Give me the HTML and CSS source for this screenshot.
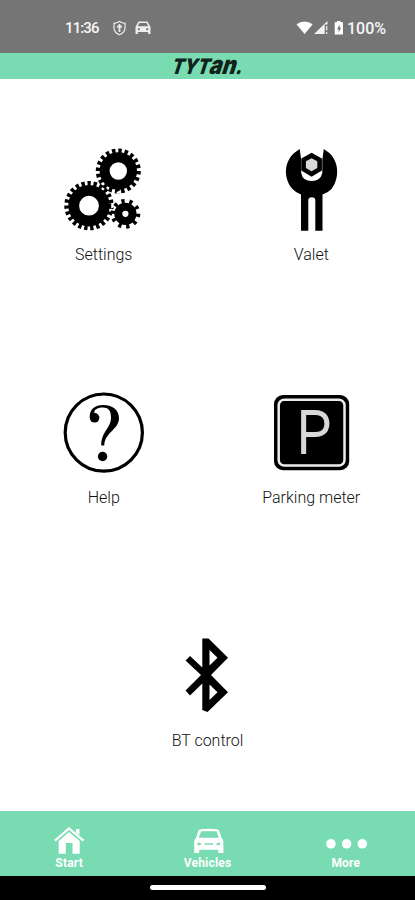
FILE: index.html
```html
<!DOCTYPE html>
<html lang="en">
<head>
<meta charset="utf-8">
<meta name="viewport" content="width=device-width, initial-scale=1">
<title>Tytan</title>
<link rel="stylesheet" href="styles.css">
</head>
<body>
<div class="app">
  <header class="status">
    <span class="clock">11:36</span>
    <svg class="shield" viewBox="112 20 16 16" fill="none" stroke="#eee" stroke-width="1.2"><path d="M119.5 21.5 Q117 23.2 114 23.3 V28 Q114 32.5 119.5 34.8 Q125 32.5 125 28 V23.3 Q122 23.2 119.5 21.5Z"/><path stroke-width="1.8" d="M119.5 24V32M117 26.7h5"/></svg>
    <svg class="minicar" viewBox="0 0 16 14" fill="#eee" fill-rule="evenodd"><path d="M3.5.5h9L15.5 6v7h-2.3v-2H2.8v2H.5V6ZM4.4 2 2.8 5.3h10.4L11.6 2ZM3.8 7a1.1 1.1 0 1 0 .01 0ZM12.2 7a1.1 1.1 0 1 0 .01 0Z"/></svg>
    <svg class="signals" viewBox="296 20 50 16" fill="#fff"><path d="M296.5 24.3Q304.5 18.5 312.7 24.3L304.6 34Z"/><path d="M314 34 327.5 21v3.5h-2.8V34Z" opacity=".9"/><path d="M325.9 26h1.5v4.5h-1.5zM325.9 32h1.5v2h-1.5z" opacity=".75"/><path fill-rule="evenodd" d="M334.7 22.3h2.2V21h3.6v1.3h2.5V34.5h-8.3ZM339.7 24.5 337 29.2h1.6v3.3l2.6-4.7h-1.5Z"/></svg>
    <span class="battery">100%</span>
  </header>
  <div class="brand">
    <svg class="logo" viewBox="0 0 76 20"><g transform="translate(4.5 0) skewX(-18)"><text x="1.5" y="17.8" textLength="71" lengthAdjust="spacingAndGlyphs">TYT<tspan class="unicase">an</tspan>.</text></g></svg>
  </div>
  <main class="menu">
    <a class="tile">
      <svg class="icon" viewBox="54 145 100 90" fill="none" stroke="#000">
        <g><circle cx="118.3" cy="171" r="13.7" stroke-width="10"/><circle cx="118.3" cy="171" r="20.2" stroke-width="4.6" pathLength="40" stroke-dasharray="1.1 .9"/></g>
        <g><circle cx="89" cy="205.7" r="15.3" stroke-width="10.8"/><circle cx="89" cy="205.7" r="22.2" stroke-width="5" pathLength="46" stroke-dasharray="1.1 .9"/></g>
        <g><circle cx="125.4" cy="213.8" r="7.1" stroke-width="8"/><circle cx="125.4" cy="213.8" r="12.6" stroke-width="4.6" pathLength="20" stroke-dasharray=".8 1.2"/></g>
      </svg>
      <span class="label">Settings</span>
    </a>
    <a class="tile">
      <svg class="icon" viewBox="261 145 100 90">
        <path d="M299.7 149L294.5 152.8C283.5 162 283.5 179 292.5 189Q296 192.8 301 194.6V230.8H308.3V200Q308.3 197.4 311.8 197.2Q315.3 197.4 315.3 200V230.8H322.5V194.6Q328 192.7 331.5 189C339.5 179 339.5 162 329 152.8L323.8 149L322.3 160V173Q320.5 181 311.7 181Q302.5 181 301.2 173V160Z"/>
        <path d="M311.6 152.7 321.9 158.5V170.5L311.6 176.7 301.3 170.5V158.5Z"/>
        <path fill="#d9d9d9" d="M311.6 158.2 317.3 161.3V168L311.6 171.2 305.9 168V161.3Z"/>
      </svg>
      <span class="label">Valet</span>
    </a>
    <a class="tile">
      <svg class="icon" viewBox="54 389 100 90">
        <circle cx="103.8" cy="432.6" r="38.6" fill="none" stroke="#000" stroke-width="3.2"/>
        <path d="M90 419C88.5 410.5 94 405 103 405C113.5 405 119 410.5 119 418.3C119 429.5 104.6 432.5 104.3 445.5H101.3C101 431.5 111 428.5 111 417.5C111 410 108 407.4 103 407.4C97 407.4 93.5 410 94.5 413.4Z"/>
        <circle cx="94.6" cy="417.8" r="4.8"/><circle cx="102.6" cy="456.5" r="4.7"/>
      </svg>
      <span class="label low">Help</span>
    </a>
    <a class="tile">
      <svg class="icon" viewBox="261 389 100 90">
        <rect x="274" y="395" width="75.2" height="75.2" rx="9"/>
        <rect x="278.7" y="399.7" width="65.8" height="65.8" rx="5.5" fill="none" stroke="#ededed" stroke-width="2.5"/>
        <text class="park" x="297" y="453" textLength="34" lengthAdjust="spacingAndGlyphs">P</text>
      </svg>
      <span class="label low">Parking meter</span>
    </a>
    <a class="tile wide">
      <svg class="icon" viewBox="157 632 100 90">
        <path fill-rule="evenodd" d="M201.3 638.5H207.5L227 657.8 210 675 227 692.3 206.5 712 201.3 710V683.5L189 695.5 184.5 690.5 200 675 184.5 660.5 189 656 201.3 667.5ZM208.5 650V665.5L216.5 657.8ZM208.5 684.5V700L216.5 692.3Z"/>
      </svg>
      <span class="label low">BT control</span>
    </a>
  </main>
  <nav class="tabs">
    <a class="tab">
      <svg class="tabicon" viewBox="49 825 40 30" fill="#fff"><path d="M58.7 841 69 832 79.7 841V853.7H72.5V843H65.8V853.7H58.7Z"/><path d="M55 840.7 69 828.5 83.5 840.7" fill="none" stroke="#fff" stroke-width="2.2"/><path d="M76 829h3.5v6l-3.5-2.5z"/></svg>
      <span class="tabtext">Start</span>
    </a>
    <a class="tab">
      <svg class="tabicon" viewBox="187 825 40 30"><path fill="#fff" fill-rule="evenodd" d="M200.5 829.2Q208.7 828.2 217 829.2Q218.5 829.3 219.2 831L221.6 838Q223.4 839.5 223.4 842V853H218.2V849.7H199.2V853H194.2V842Q194.2 839.5 196 838L198.2 831Q199 829.3 200.5 829.2ZM201.2 831.2 198.7 837.7H219L216.4 831.2ZM197.5 842.5V845Q200 845.8 201.7 844Q200 842.3 197.5 842.5ZM220 842.5V845Q217.5 845.8 215.8 844Q217.5 842.3 220 842.5ZM204.7 843.2V844.8H213V843.2Z"/></svg>
      <span class="tabtext">Vehicles</span>
    </a>
    <a class="tab">
      <svg class="tabicon wideicon" viewBox="321 825 50 30" fill="#fff"><circle cx="330.9" cy="843.8" r="4.8"/><circle cx="346.6" cy="843.8" r="4.8"/><circle cx="362.3" cy="843.8" r="4.8"/></svg>
      <span class="tabtext">More</span>
    </a>
  </nav>
  <footer class="gesture"><div class="handle"></div></footer>
</div>
</body>
</html>
```

FILE: styles.css
```css
* { box-sizing: border-box; }
body { margin: 0; background: #fff; font-family: Roboto, "Liberation Sans", sans-serif; }
.app { width: 415px; height: 900px; display: flex; flex-direction: column; overflow: hidden; }
svg { display: block; flex: none; }

.status { height: 53px; flex: none; background: #757575; display: flex; align-items: center; padding: 3px 20px 0 65px; color: #f5f5f5; font-size: 16px; }
.clock { width: 47px; font-weight: 500; font-size: 15px; letter-spacing: -.9px; }
.shield { width: 16px; height: 16px; }
.minicar { width: 16px; height: 14px; margin-left: 7px; }
.signals { width: 50px; height: 16px; margin-left: 145px; }
.battery { margin-left: 1px; font-weight: 500; font-size: 16px; }

.brand { height: 26px; flex: none; background: #79dbb2; display: flex; justify-content: center; align-items: center; }
.logo { width: 76px; height: 20px; overflow: visible; fill: #10231b; font: 900 21.5px Inter, sans-serif; }
.unicase { font-size: 26px; }

.menu { height: 732px; flex: none; display: grid; grid-template-columns: 1fr 1fr; grid-template-rows: 244px 243px 245px; }
.tile { display: flex; flex-direction: column; align-items: center; padding-top: 66px; }
.wide { grid-column: 1 / 3; }
.icon { width: 100px; height: 90px; }
.label { margin-top: 10px; font-size: 16px; line-height: 19px; font-weight: 300; color: #111; letter-spacing: 0; }
.low { margin-top: 9px; }
.park { font: 300 60px Roboto, sans-serif; fill: #d8d8d8; stroke: #d8d8d8; stroke-width: 1.8px; }

.tabs { height: 65px; flex: none; background: #79dbb2; display: grid; grid-template-columns: repeat(3, 1fr); }
.tab { display: flex; flex-direction: column; align-items: center; padding-top: 14px; color: #fff; }
.tabicon { width: 40px; height: 30px; }
.wideicon { width: 50px; }
.tabtext { margin-top: 1px; font-size: 12px; line-height: 15px; font-weight: 700; letter-spacing: .2px; }

.gesture { flex: 1; background: #000; display: flex; justify-content: center; padding-top: 9px; }
.handle { width: 116px; height: 5px; border-radius: 3px; background: #fff; }
```
